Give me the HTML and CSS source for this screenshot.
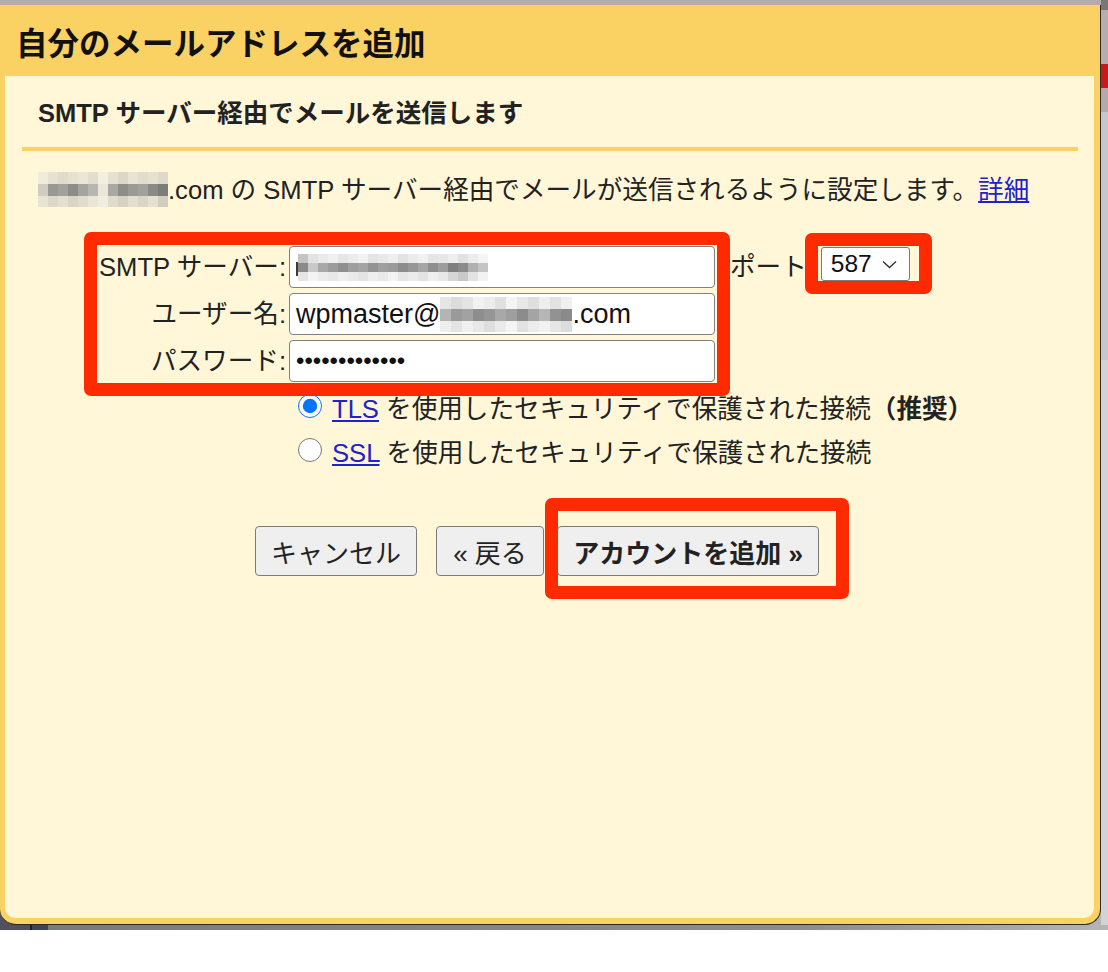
FILE: index.html
```html
<!DOCTYPE html>
<html lang="ja">
<head>
  <meta charset="UTF-8">
  <meta name="viewport" content="width=device-width, initial-scale=1.0">
  <title>自分のメールアドレスを追加</title>
  <link rel="stylesheet" href="styles.css">
</head>
<body>

  <div class="screen">
    <div class="stage">

      <div class="dialog">
        <header class="dialog-head">
          <h1>自分のメールアドレスを追加</h1>
        </header>

        <div class="dialog-body">
          <h2>SMTP サーバー経由でメールを送信します</h2>
          <hr class="rule">

          <p class="desc"><svg class="mosaic mosaic-desc" width="130" height="35" viewBox="0 0 130 35" shape-rendering="crispEdges" aria-hidden="true">
              <rect x="0" y="0" width="10" height="12" fill="#f0ecdc"/><rect x="10" y="0" width="10" height="12" fill="#e6e2d2"/><rect x="20" y="0" width="10" height="12" fill="#e0dccb"/><rect x="30" y="0" width="10" height="12" fill="#e6e2d1"/><rect x="40" y="0" width="10" height="12" fill="#ebe7d7"/><rect x="50" y="0" width="10" height="12" fill="#e2decd"/><rect x="60" y="0" width="10" height="12" fill="#f3efe0"/><rect x="70" y="0" width="10" height="12" fill="#e5e1d1"/><rect x="80" y="0" width="10" height="12" fill="#dcd8c7"/><rect x="90" y="0" width="10" height="12" fill="#e8e4d4"/><rect x="100" y="0" width="10" height="12" fill="#e1ddcc"/><rect x="110" y="0" width="10" height="12" fill="#e6e2d2"/><rect x="120" y="0" width="10" height="12" fill="#dedac9"/>
              <rect x="0" y="12" width="10" height="12" fill="#cfccc1"/><rect x="10" y="12" width="10" height="12" fill="#9a9893"/><rect x="20" y="12" width="10" height="12" fill="#a3a19b"/><rect x="30" y="12" width="10" height="12" fill="#8e8c88"/><rect x="40" y="12" width="10" height="12" fill="#a6a49e"/><rect x="50" y="12" width="10" height="12" fill="#b8b6ae"/><rect x="60" y="12" width="10" height="12" fill="#ebe7d8"/><rect x="70" y="12" width="10" height="12" fill="#a9a7a0"/><rect x="80" y="12" width="10" height="12" fill="#8f8d89"/><rect x="90" y="12" width="10" height="12" fill="#9c9a94"/><rect x="100" y="12" width="10" height="12" fill="#a2a09a"/><rect x="110" y="12" width="10" height="12" fill="#8b8985"/><rect x="120" y="12" width="10" height="12" fill="#7d7c79"/>
              <rect x="0" y="24" width="10" height="11" fill="#e8e4d4"/><rect x="10" y="24" width="10" height="11" fill="#dcd8c8"/><rect x="20" y="24" width="10" height="11" fill="#e4e0d0"/><rect x="30" y="24" width="10" height="11" fill="#d9d5c5"/><rect x="40" y="24" width="10" height="11" fill="#e1ddcd"/><rect x="50" y="24" width="10" height="11" fill="#eae6d6"/><rect x="60" y="24" width="10" height="11" fill="#f2eedf"/><rect x="70" y="24" width="10" height="11" fill="#e0dccc"/><rect x="80" y="24" width="10" height="11" fill="#d6d2c2"/><rect x="90" y="24" width="10" height="11" fill="#e3dfcf"/><rect x="100" y="24" width="10" height="11" fill="#dad6c6"/><rect x="110" y="24" width="10" height="11" fill="#e5e1d1"/><rect x="120" y="24" width="10" height="11" fill="#d2cebf"/>
            </svg>.com の SMTP サーバー経由でメールが送信されるように設定します。<a href="#">詳細</a></p>

          <div class="smtp">
            <div class="fields mark mark-fields">
              <label>SMTP サーバー:</label>
              <div class="field">
                <svg class="mosaic" width="192" height="27" viewBox="0 0 192 27" shape-rendering="crispEdges" aria-hidden="true">
                  <rect x="0" y="8" width="2" height="14" fill="#3a3a3a"/>
                  <rect x="2" y="0" width="10" height="9" fill="#c4c4c4"/><rect x="12" y="0" width="10" height="9" fill="#e2e2e2"/><rect x="22" y="0" width="10" height="9" fill="#eaeaea"/><rect x="32" y="0" width="10" height="9" fill="#f0f0f0"/><rect x="42" y="0" width="10" height="9" fill="#e6e6e6"/><rect x="52" y="0" width="10" height="9" fill="#ececec"/><rect x="62" y="0" width="10" height="9" fill="#f2f2f2"/><rect x="72" y="0" width="10" height="9" fill="#e4e4e4"/><rect x="82" y="0" width="10" height="9" fill="#e9e9e9"/><rect x="92" y="0" width="10" height="9" fill="#efefef"/><rect x="102" y="0" width="10" height="9" fill="#e3e3e3"/><rect x="112" y="0" width="10" height="9" fill="#ebebeb"/><rect x="122" y="0" width="10" height="9" fill="#f1f1f1"/><rect x="132" y="0" width="10" height="9" fill="#e5e5e5"/><rect x="142" y="0" width="10" height="9" fill="#e8e8e8"/><rect x="152" y="0" width="10" height="9" fill="#eeeeee"/><rect x="162" y="0" width="10" height="9" fill="#e2e2e2"/><rect x="172" y="0" width="10" height="9" fill="#ececec"/><rect x="182" y="0" width="10" height="9" fill="#f4f4f4"/>
                  <rect x="2" y="9" width="10" height="9" fill="#8a8a8a"/><rect x="12" y="9" width="10" height="9" fill="#c8c8c8"/><rect x="22" y="9" width="10" height="9" fill="#a8a8a8"/><rect x="32" y="9" width="10" height="9" fill="#9c9c9c"/><rect x="42" y="9" width="10" height="9" fill="#8f8f8f"/><rect x="52" y="9" width="10" height="9" fill="#9e9e9e"/><rect x="62" y="9" width="10" height="9" fill="#a4a4a4"/><rect x="72" y="9" width="10" height="9" fill="#939393"/><rect x="82" y="9" width="10" height="9" fill="#a0a0a0"/><rect x="92" y="9" width="10" height="9" fill="#9b9b9b"/><rect x="102" y="9" width="10" height="9" fill="#8c8c8c"/><rect x="112" y="9" width="10" height="9" fill="#979797"/><rect x="122" y="9" width="10" height="9" fill="#a6a6a6"/><rect x="132" y="9" width="10" height="9" fill="#8e8e8e"/><rect x="142" y="9" width="10" height="9" fill="#9d9d9d"/><rect x="152" y="9" width="10" height="9" fill="#7f7f7f"/><rect x="162" y="9" width="10" height="9" fill="#8b8b8b"/><rect x="172" y="9" width="10" height="9" fill="#b0b0b0"/><rect x="182" y="9" width="10" height="9" fill="#c4c4c4"/>
                  <rect x="2" y="18" width="10" height="9" fill="#e6e6e6"/><rect x="12" y="18" width="10" height="9" fill="#f4f4f4"/><rect x="22" y="18" width="10" height="9" fill="#ececec"/><rect x="32" y="18" width="10" height="9" fill="#e8e8e8"/><rect x="42" y="18" width="10" height="9" fill="#f0f0f0"/><rect x="52" y="18" width="10" height="9" fill="#eaeaea"/><rect x="62" y="18" width="10" height="9" fill="#e4e4e4"/><rect x="72" y="18" width="10" height="9" fill="#eeeeee"/><rect x="82" y="18" width="10" height="9" fill="#e9e9e9"/><rect x="92" y="18" width="10" height="9" fill="#f2f2f2"/><rect x="102" y="18" width="10" height="9" fill="#e6e6e6"/><rect x="112" y="18" width="10" height="9" fill="#ebebeb"/><rect x="122" y="18" width="10" height="9" fill="#e3e3e3"/><rect x="132" y="18" width="10" height="9" fill="#efefef"/><rect x="142" y="18" width="10" height="9" fill="#e8e8e8"/><rect x="152" y="18" width="10" height="9" fill="#d6d6d6"/><rect x="162" y="18" width="10" height="9" fill="#c9c9c9"/><rect x="172" y="18" width="10" height="9" fill="#e2e2e2"/><rect x="182" y="18" width="10" height="9" fill="#f2f2f2"/>
                </svg>
              </div>

              <label>ユーザー名:</label>
              <div class="field">
                <span>wpmaster@</span><svg class="mosaic" width="132" height="35" viewBox="0 0 132 35" shape-rendering="crispEdges" aria-hidden="true">
                  <rect x="0" y="0" width="11" height="12" fill="#e6e6e6"/><rect x="11" y="0" width="11" height="12" fill="#dcdcdc"/><rect x="22" y="0" width="11" height="12" fill="#e4e4e4"/><rect x="33" y="0" width="11" height="12" fill="#f2f2f2"/><rect x="44" y="0" width="11" height="12" fill="#ececec"/><rect x="55" y="0" width="11" height="12" fill="#e0e0e0"/><rect x="66" y="0" width="11" height="12" fill="#f4f4f4"/><rect x="77" y="0" width="11" height="12" fill="#e8e8e8"/><rect x="88" y="0" width="11" height="12" fill="#dedede"/><rect x="99" y="0" width="11" height="12" fill="#eeeeee"/><rect x="110" y="0" width="11" height="12" fill="#e2e2e2"/><rect x="121" y="0" width="11" height="12" fill="#f0f0f0"/>
                  <rect x="0" y="12" width="11" height="12" fill="#b4b4b4"/><rect x="11" y="12" width="11" height="12" fill="#9a9a9a"/><rect x="22" y="12" width="11" height="12" fill="#a2a2a2"/><rect x="33" y="12" width="11" height="12" fill="#8e8e8e"/><rect x="44" y="12" width="11" height="12" fill="#969696"/><rect x="55" y="12" width="11" height="12" fill="#a8a8a8"/><rect x="66" y="12" width="11" height="12" fill="#9e9e9e"/><rect x="77" y="12" width="11" height="12" fill="#8c8c8c"/><rect x="88" y="12" width="11" height="12" fill="#a4a4a4"/><rect x="99" y="12" width="11" height="12" fill="#b6b6b6"/><rect x="110" y="12" width="11" height="12" fill="#929292"/><rect x="121" y="12" width="11" height="12" fill="#8a8a8a"/>
                  <rect x="0" y="24" width="11" height="11" fill="#eeeeee"/><rect x="11" y="24" width="11" height="11" fill="#e4e4e4"/><rect x="22" y="24" width="11" height="11" fill="#f0f0f0"/><rect x="33" y="24" width="11" height="11" fill="#e8e8e8"/><rect x="44" y="24" width="11" height="11" fill="#dedede"/><rect x="55" y="24" width="11" height="11" fill="#eaeaea"/><rect x="66" y="24" width="11" height="11" fill="#f4f4f4"/><rect x="77" y="24" width="11" height="11" fill="#e2e2e2"/><rect x="88" y="24" width="11" height="11" fill="#ececec"/><rect x="99" y="24" width="11" height="11" fill="#f2f2f2"/><rect x="110" y="24" width="11" height="11" fill="#e6e6e6"/><rect x="121" y="24" width="11" height="11" fill="#dcdcdc"/>
                </svg><span>.com</span>
              </div>

              <label>パスワード:</label>
              <div class="field"><span class="dots">•••••••••••••</span></div>
            </div>

            <div class="port">
              <span>ポート</span>
              <span class="mark mark-port">
                <span class="select">587
                  <svg class="chev" width="15" height="9" viewBox="0 0 15 9" aria-hidden="true"><path d="M1 1.5 L7.5 7.5 L14 1.5" fill="none" stroke="#333" stroke-width="1.4"/></svg>
                </span>
              </span>
            </div>
          </div>

          <div class="security">
            <label class="choice"><input type="radio" name="security" checked><span><a href="#">TLS</a> を使用したセキュリティで保護された接続<b>（推奨）</b></span></label>
            <label class="choice"><input type="radio" name="security"><span><a href="#">SSL</a> を使用したセキュリティで保護された接続</span></label>
          </div>

          <div class="actions">
            <button class="btn">キャンセル</button>
            <button class="btn btn-back">« 戻る</button>
            <span class="mark mark-add"><button class="btn btn-add">アカウントを追加 »</button></span>
          </div>
        </div>
      </div>

      <div class="behind"></div>
    </div>
  </div>

</body>
</html>
```

FILE: styles.css
```css
body {
  margin: 0;
  background: #fff;
  font-family: "Liberation Sans", "Noto Sans CJK JP", sans-serif;
  font-size: 25.6px;
  color: #222;
}

.screen {
  height: 930px;
  background:
    linear-gradient(#b4abab, #b4abab) top / 100% 5px no-repeat,
    linear-gradient(90deg, #50505f 0 30px, #1e1e24 30px 32px, #3b4657 32px 48px, #7b7b7b 48px, #8c8c8c 800px, #b5b5b5 1108px);
}
.stage {
  display: flex;
  padding-top: 5px;
}

.dialog {
  box-sizing: border-box;
  width: 1101px;
  height: 920px;
  display: flex;
  flex-direction: column;
  background: #fad163;
  border-right: 1px solid #2a2a2a;
  border-bottom: 1px solid #2a2a2a;
  border-radius: 0 0 16px 16px;
}
.behind {
  flex: 1;
  margin-top: -5px;
  background: linear-gradient(#7a7676 0 10px, #b6aeae 10px 64px, #c8191c 64px 88px, #b3abab 88px 112px, #c5c7cc 112px 360px, #d3d3d6 360px);
}

.dialog-head {
  box-sizing: border-box;
  height: 71px;
  padding: 19px 0 0 16px;
}
.dialog-head h1 {
  margin: 0;
  font-size: 31.5px;
  line-height: 40px;
  color: #111;
}

.dialog-body {
  flex: 1;
  margin: 0 6px 6px 5px;
  padding: 20px 16px 0 33px;
  background: #fff7d7;
  border-radius: 0 0 10px 10px;
}
.dialog-body h2 {
  margin: 0;
  font-size: 25.5px;
  line-height: 34px;
}
.rule {
  height: 4px;
  margin: 17px 0 0 -16px;
  border: 0;
  background: #fad163;
}
.desc {
  margin: 21px 0 0;
  line-height: 34px;
}
.desc .mosaic {
  vertical-align: -8px;
}
a {
  color: #2222cc;
}

/* red annotation frames drawn over the form */
.mark {
  position: relative;
  display: inline-flex;
}
.mark::after {
  content: "";
  position: absolute;
  border: 13px solid #ff2a00;
  border-radius: 7px;
  pointer-events: none;
}
.mark-fields::after {
  inset: -14px -15px -14px -13px;
}
.mark-port::after {
  inset: -14px -22px -13px -16px;
}
.mark-add::after {
  inset: -28px -30px -23px -12px;
}

.smtp {
  display: flex;
  align-items: flex-start;
  margin: 39px 0 0 59px;
}
.fields {
  display: grid;
  grid-template-columns: 189px 426px;
  column-gap: 3px;
  row-gap: 5px;
}
.fields label {
  text-align: right;
  line-height: 42px;
  white-space: nowrap;
}
.field {
  box-sizing: border-box;
  height: 42px;
  display: flex;
  align-items: center;
  padding-left: 6px;
  background: #fff;
  border: 1px solid #808080;
  border-radius: 4px;
  font-size: 27px;
  color: #111;
}
.dots {
  font-size: 24px;
}

.port {
  display: flex;
  align-items: center;
  height: 36px;
  margin-left: 15px;
}
.port .mark {
  margin-left: 14px;
}
.select {
  box-sizing: border-box;
  width: 89px;
  height: 34px;
  display: flex;
  align-items: center;
  gap: 10px;
  padding-left: 9px;
  font-size: 24.5px;
  background: #fff;
  border: 1px solid #7a7a7a;
  border-radius: 3px;
  color: #111;
}

.security {
  margin-left: 260px;
}
.choice {
  display: flex;
  align-items: center;
  height: 44px;
}
.choice:first-child {
  margin-top: 2px;
}
.choice input {
  width: 24px;
  height: 24px;
  margin: 0 10px 0 0;
}

.actions {
  display: flex;
  align-items: center;
  margin: 54px 0 0 217px;
}
.btn {
  box-sizing: border-box;
  height: 50px;
  padding: 0 15px;
  font-family: inherit;
  font-size: 26px;
  color: #222;
  background: #efefef;
  border: 1px solid #7b7b7b;
  border-radius: 4px;
}
.btn-back {
  width: 108px;
  margin-left: 19px;
}
.mark-add {
  margin-left: 13px;
}
.btn-add {
  width: 262px;
  font-weight: bold;
}
```
